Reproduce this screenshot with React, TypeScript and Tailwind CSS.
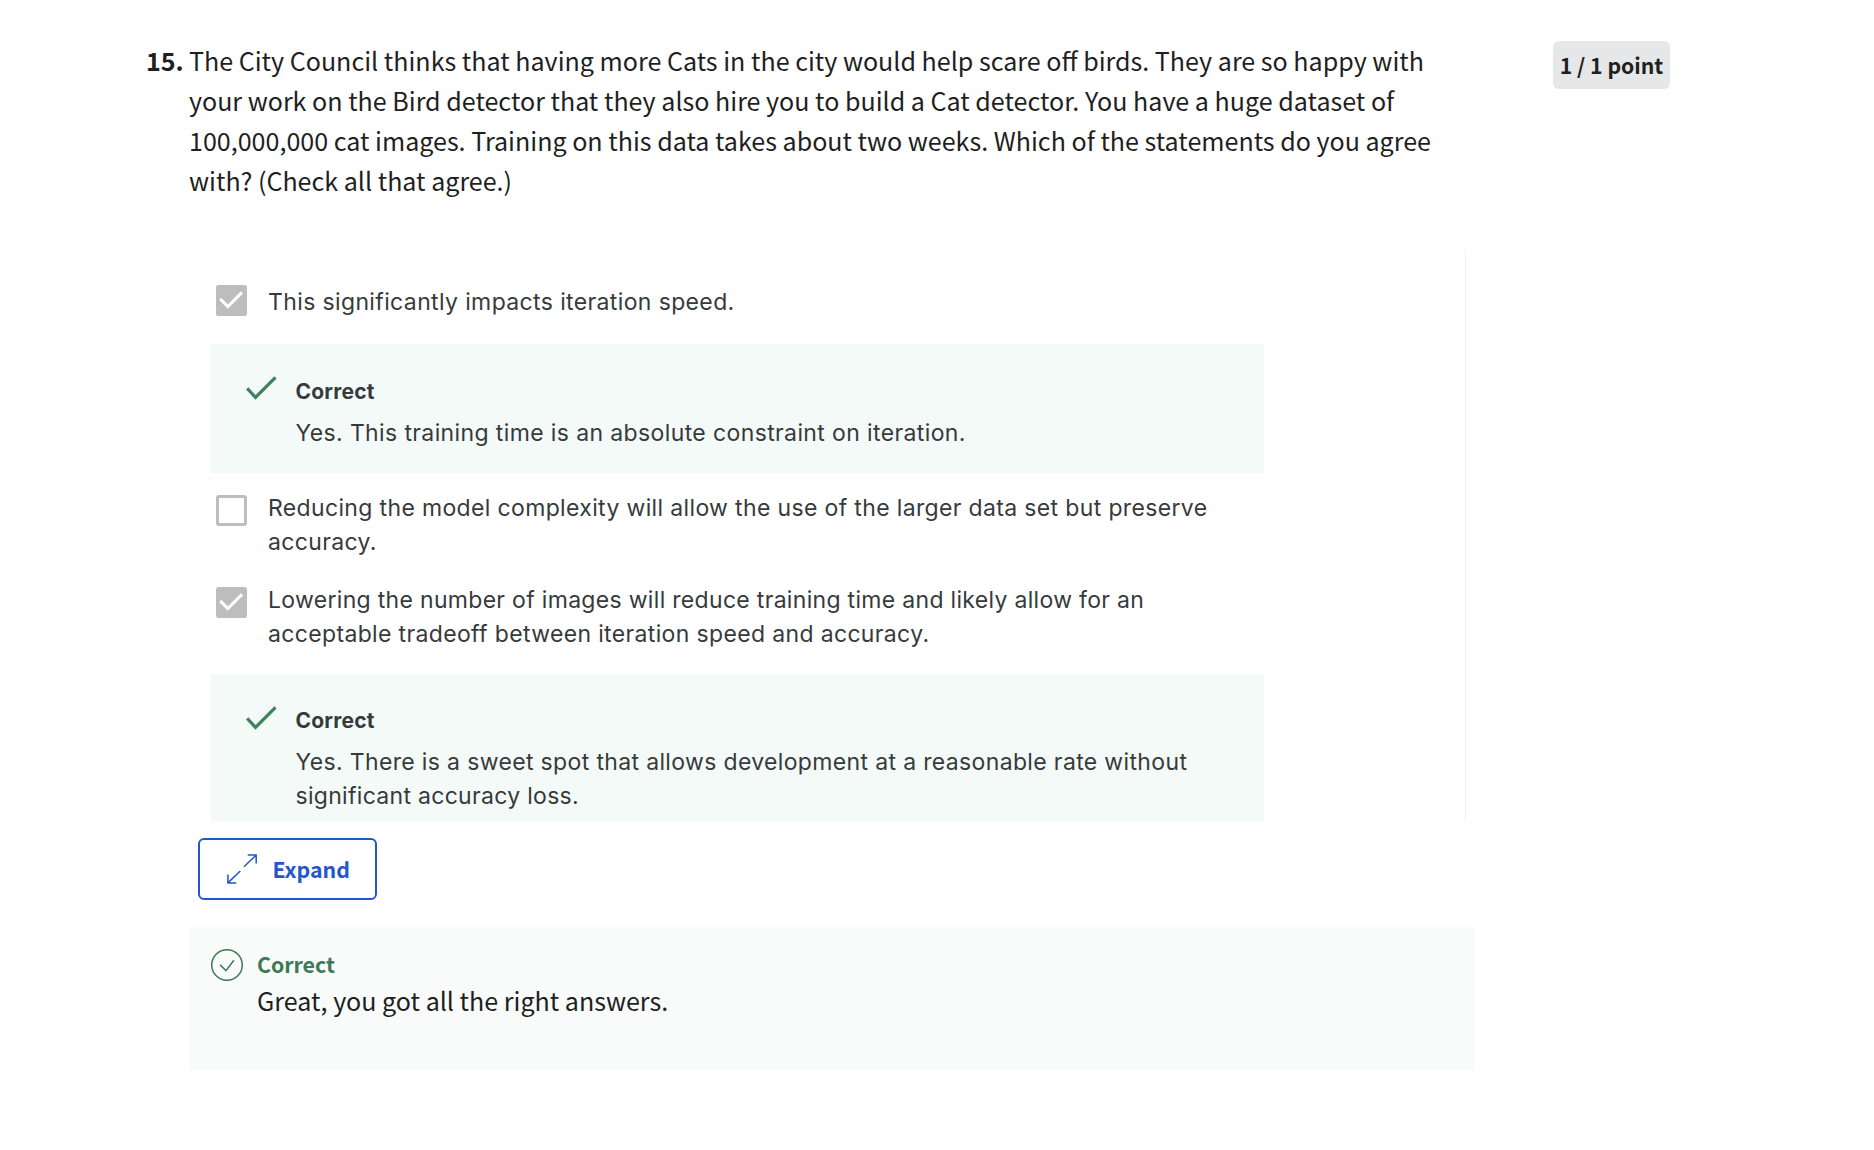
import type { ReactNode } from "react";

function Checkbox({ checked }: { checked?: boolean }) {
  return (
    <svg viewBox="0 0 31 31" className="h-[31px] w-[31px] shrink-0" fill="none">
      {checked ? (
        <>
          <rect width="31" height="31" rx="2.5" fill="#bdbdbd" />
          <path d="M4.2 13.9 11.8 21.6 26 7.4" stroke="#fff" strokeWidth="3" />
        </>
      ) : (
        <rect x="1.5" y="1.5" width="28" height="28" rx="1.5" fill="#fff" stroke="#bdbdbd" strokeWidth="3" />
      )}
    </svg>
  );
}

function Option({ checked, children }: { checked?: boolean; children: ReactNode }) {
  return (
    <div className="flex gap-[21px] pl-[27px]">
      <div className="pt-1">
        <Checkbox checked={checked} />
      </div>
      <p className="whitespace-nowrap">{children}</p>
    </div>
  );
}

function Feedback({ children }: { children: ReactNode }) {
  return (
    <div className="ml-[22px] flex w-[1053px] bg-[#f4faf8] pl-[35px]">
      <svg viewBox="0 0 31 24" className="mt-8 h-6 w-[31px] shrink-0" fill="none">
        <path d="M1.2 12.3 9.5 21.4 29.5 1.4" stroke="#3f825b" strokeWidth="3.2" />
      </svg>
      <div className="ml-[18.5px]">{children}</div>
    </div>
  );
}

function FeedbackTitle() {
  return <h3 className="text-[21px] font-bold leading-[34px] tracking-[0.2px]">Correct</h3>;
}

export default function App() {
  return (
    <main className="min-h-[1150px] bg-white pl-[146px] pt-10 font-['Noto_Sans_CJK_SC','Noto_Sans',sans-serif] text-[#1f1f1f]">
      <header className="flex items-start text-[25.07px] leading-[40px]">
        <span className="w-[43px] font-bold">15.</span>
        <p className="w-[1277px] whitespace-nowrap">
          The City Council thinks that having more Cats in the city would help scare off birds. They are so happy with
          <br />
          your work on the Bird detector that they also hire you to build a Cat detector. You have a huge dataset of
          <br />
          100,000,000 cat images. Training on this data takes about two weeks. Which of the statements do you agree
          <br />
          with? (Check all that agree.)
        </p>
        <div className="ml-[87px] mt-px flex h-12 w-[117px] items-center justify-center whitespace-nowrap rounded-md bg-[#e5e7e8] text-[21.2px] font-bold leading-8">
          1 / 1 point
        </div>
      </header>

      <section className="ml-[43px] mt-[50px] h-[571px] w-[1277px] overflow-hidden border-r border-t border-r-[#f1f1f1] border-t-[#fdfdfd] pt-[34px] font-[Inter,sans-serif] text-[23px] leading-[34px] tracking-[0.35px] text-[#373a3c]">
        <div className="flex gap-[21px] pl-[27px]">
          <Checkbox checked />
          <p className="whitespace-nowrap tracking-[0.37px]">This significantly impacts iteration speed.</p>
        </div>
        <div className="mt-[25px]">
          <Feedback>
            <div className="pt-[31px]">
              <FeedbackTitle />
            </div>
            <p className="mb-[23px] mt-[7px] whitespace-nowrap tracking-[0.38px]">
              Yes. This training time is an absolute constraint on iteration.
            </p>
          </Feedback>
        </div>
        <div className="mt-[18px]">
          <Option>
            Reducing the model complexity will allow the use of the larger data set but preserve
            <br />
            accuracy.
          </Option>
        </div>
        <div className="mt-6">
          <Option checked>
            <span className="tracking-[0.31px]">
              Lowering the number of images will reduce training time and likely allow for an
            </span>
            <br />
            acceptable tradeoff between iteration speed and accuracy.
          </Option>
        </div>
        <div className="mt-[23px]">
          <Feedback>
            <div className="pt-[30px]">
              <FeedbackTitle />
            </div>
            <p className="mb-6 mt-[7px] whitespace-nowrap">
              Yes. There is a sweet spot that allows development at a reasonable rate without
              <br />
              <span className="tracking-[0.3px]">significant accuracy loss.</span>
            </p>
          </Feedback>
        </div>
      </section>

      <button className="ml-[52px] mt-[17px] flex h-[62px] w-[179px] items-center rounded-md border-2 border-[#2257cb] pl-[26px] text-[21.3px] font-bold leading-8 text-[#2257cb]">
        <svg viewBox="0 0 32 32" className="h-8 w-8 shrink-0" fill="none" stroke="#2257cb" strokeWidth="1.5">
          <path d="M18 13.8 30.2 2M21.7 2.1h8.5v8.4M14.3 18 1.9 29.9M1.9 21.5v8.4h8.4" />
        </svg>
        <span className="ml-[14.5px]">Expand</span>
      </button>

      <section className="ml-[43px] mt-[27px] flex h-[143px] w-[1286px] bg-[#f9fbfa] pl-[22px] pt-[21px]">
        <svg viewBox="0 0 32 32" className="mt-px h-8 w-8 shrink-0" fill="none" stroke="#3b7a52" strokeWidth="1.5">
          <circle cx="16" cy="16" r="15.3" />
          <path d="M9 15.7 14.9 21.6 22.9 11.2" />
        </svg>
        <div className="ml-[14px]">
          <h2 className="text-[21.3px] font-bold leading-8 text-[#3b7a52]">Correct</h2>
          <p className="text-[25.07px] leading-[40px]">Great, you got all the right answers.</p>
        </div>
      </section>
    </main>
  );
}
